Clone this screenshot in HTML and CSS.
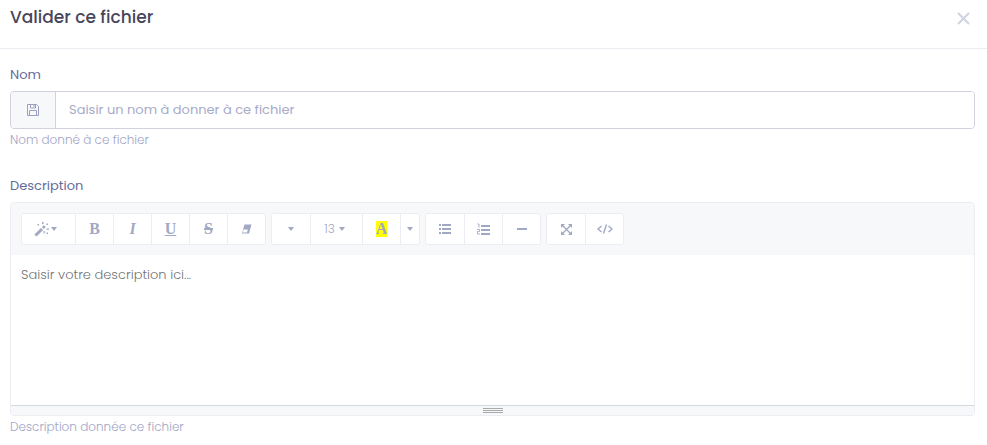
FILE: index.html
```html
<!DOCTYPE html>
<html lang="fr">
<head>
    <meta charset="UTF-8">
    <meta name="viewport" content="width=device-width, initial-scale=1.0">
    <title>Valider ce fichier</title>
    <link rel="stylesheet" href="styles.css">
</head>
<body>

<header class="modal-header">
    <h1 class="modal-title">Valider ce fichier</h1>
    <button type="button" class="close" aria-label="Fermer">
        <svg width="13" height="13" viewBox="0 0 13 13"><path d="M1 1l11 11M12 1l-11 11" fill="none" stroke="currentColor" stroke-width="2"/></svg>
    </button>
</header>

<form class="modal-body">
    <div class="form-group">
        <label for="nom">Nom</label>
        <div class="input-group">
            <span class="input-icon">
                <svg width="14" height="14" viewBox="0 0 14 14" fill="none" stroke="currentColor"><path d="M1.5 1.5h9l2 2v9h-11zM4.500 1.500v3.500h5v-3.500M8 2v2M3.500 12.500v-5h7v5"/></svg>
            </span>
            <input type="text" id="nom" placeholder="Saisir un nom à donner à ce fichier">
        </div>
        <small class="help">Nom donné à ce fichier</small>
    </div>

    <div class="form-group">
        <label for="description">Description</label>
        <div class="editor">
            <div class="toolbar">
                <div class="btn-group">
                    <button type="button" class="btn btn-style" aria-label="Style">
                        <svg width="16" height="16" viewBox="0 0 16 16"><path d="M1.500 14.500L8 8" fill="none" stroke="currentColor" stroke-width="3"/><path d="M8.800 7.200l2-2" fill="none" stroke="currentColor" stroke-width="2.500"/><path d="M3.500 3H5v1.500H3.500zM8 1h1.500v2H8zM12.500 2.500H14V4h-1.500zM12.500 7.500H15v1.200h-2.500zM12.500 11.500H14V13h-1.500zM9.500 10h1.200v2.500H9.500z" fill="currentColor"/></svg>
                        <span class="caret"></span>
                    </button>
                    <button type="button" class="btn" aria-label="Gras"><b class="letter">B</b></button>
                    <button type="button" class="btn" aria-label="Italique"><b class="letter"><i>I</i></b></button>
                    <button type="button" class="btn" aria-label="Souligné"><b class="letter underline">U</b></button>
                    <button type="button" class="btn" aria-label="Barré"><b class="letter strike">S</b></button>
                    <button type="button" class="btn" aria-label="Effacer la mise en forme">
                        <svg width="12" height="12" viewBox="0 0 12 12"><path d="M3.500 1.500h7l-2.500 9H1z" fill="currentColor"/><path d="M2.600 6.500h4.200l-.8 3H1.800z" fill="#fff"/></svg>
                    </button>
                </div>
                <div class="btn-group">
                    <button type="button" class="btn" aria-label="Police"><span class="caret"></span></button>
                    <button type="button" class="btn btn-size" aria-label="Taille">13<span class="caret"></span></button>
                    <button type="button" class="btn" aria-label="Couleur"><b class="letter highlight">A</b></button>
                    <button type="button" class="btn btn-more" aria-label="Plus de couleurs"><span class="caret"></span></button>
                </div>
                <div class="btn-group">
                    <button type="button" class="btn" aria-label="Liste à puces">
                        <svg width="12" height="10" viewBox="0 0 12 10" fill="currentColor"><path d="M0 0h2v2H0zM3 0h9v2H3zM0 4h2v2H0zM3 4h9v2H3zM0 8h2v2H0zM3 8h9v2H3z"/></svg>
                    </button>
                    <button type="button" class="btn" aria-label="Liste numérotée">
                        <svg width="13" height="12" viewBox="0 0 13 12" fill="currentColor"><path d="M4 2h9v2H4zM4 6h9v2H4zM4 10h9v2H4z"/><path d="M0.500 1h1.500v3.500M0 6.500h2.500v2H.5v2.500h2.500" fill="none" stroke="currentColor" stroke-width="0.900"/></svg>
                    </button>
                    <button type="button" class="btn" aria-label="Ligne horizontale">
                        <svg width="10" height="2" viewBox="0 0 10 2"><path d="M0 0h10v2H0z" fill="currentColor"/></svg>
                    </button>
                </div>
                <div class="btn-group">
                    <button type="button" class="btn" aria-label="Plein écran">
                        <svg width="11" height="11" viewBox="0 0 11 11"><path d="M1.500 1.500l8 8M9.500 1.500l-8 8" fill="none" stroke="currentColor" stroke-width="1.300"/><path d="M0 0h4L0 4zM11 0v4L7 0zM0 11V7l4 4zM11 11H7l4-4z" fill="currentColor"/></svg>
                    </button>
                    <button type="button" class="btn" aria-label="Code source">
                        <svg width="16" height="10" viewBox="0 0 16 10"><path d="M4.500 2L1 5l3.500 3M11.500 2L15 5l-3.500 3M9.500 .5l-3 9" fill="none" stroke="currentColor" stroke-width="1.400"/></svg>
                    </button>
                </div>
            </div>
            <textarea id="description" placeholder="Saisir votre description ici..."></textarea>
            <div class="statusbar"><span class="grip"></span></div>
        </div>
        <small class="help">Description donnée ce fichier</small>
    </div>
</form>

</body>
</html>
```
FILE: styles.css
```css
* {
    box-sizing: border-box;
}
body {
    margin: 0;
    font-family: Poppins, Inter, sans-serif;
    font-size: 13px;
    line-height: 20px;
    color: #646c9a;
    background-color: #fff;
}
button, input, textarea {
    font: inherit;
    color: inherit;
}
svg {
    display: block;
}
.modal-header {
    display: flex;
    justify-content: space-between;
    align-items: flex-start;
    padding: 5px 12px 16px 10px;
    border-bottom: 1px solid #ebedf2;
}
.modal-title {
    margin: 0;
    font-size: 17px;
    line-height: 24px;
    font-weight: 500;
    color: #48465b;
}
.close {
    padding: 7px 5px;
    border: none;
    background: none;
    color: #d0d3e3;
    cursor: pointer;
}
.modal-body {
    padding: 16px 12px 8px 10px;
}
.form-group {
    display: flex;
    flex-direction: column;
    margin-bottom: 26px;
}
.form-group:last-child {
    margin-bottom: 0;
}
.form-group label {
    margin-bottom: 6px;
}
.help {
    margin-top: 1px;
    font-size: 12px;
    font-weight: 300;
    color: #a1a5c6;
}
.input-group {
    display: flex;
    height: 38px;
    border: 1px solid #d1d1e0;
    border-radius: 4px;
    overflow: hidden;
}
.input-icon {
    display: flex;
    align-items: center;
    justify-content: center;
    width: 45px;
    background-color: #f7f8fa;
    border-right: 1px solid #d1d1e0;
    color: #9c9fc0;
}
.input-group input {
    flex: 1;
    min-width: 0;
    padding: 0 13px;
    border: none;
    outline: none;
}
.input-group input::placeholder {
    color: #a7abc8;
}
.editor {
    display: flex;
    flex-direction: column;
    border: 1px solid #ebedf2;
    border-radius: 4px;
    overflow: hidden;
}
.toolbar {
    display: flex;
    flex-wrap: wrap;
    gap: 5px;
    padding: 10px;
    background-color: #f7f8fa;
}
.btn-group {
    display: flex;
    border: 1px solid #ebedf2;
    border-radius: 3px;
    overflow: hidden;
}
.btn {
    display: flex;
    align-items: center;
    justify-content: center;
    width: 38px;
    height: 30px;
    padding: 0;
    border: none;
    background-color: #fff;
    color: #a1a8c3;
    font-size: 12px;
    cursor: pointer;
}
.btn + .btn {
    border-left: 1px solid #ebedf2;
}
.btn-style {
    width: 53px;
    gap: 1px;
    padding-right: 6px;
}
.btn-size {
    width: 52px;
    gap: 4px;
    padding-right: 4px;
    font-weight: 300;
}
.btn-more {
    width: 19px;
}
.caret {
    border-top: 4px solid currentColor;
    border-left: 3px solid transparent;
    border-right: 3px solid transparent;
}
.letter {
    font-family: "Liberation Serif", serif;
    font-size: 16px;
    line-height: 16px;
}
.underline {
    text-decoration: underline;
}
.strike {
    text-decoration: line-through 2px;
}
.highlight {
    background-color: #ff0;
}
.editor textarea {
    height: 150px;
    padding: 10px;
    border: none;
    outline: none;
    resize: none;
    font-weight: 300;
}
.editor textarea::placeholder {
    color: #757575;
}
.statusbar {
    display: flex;
    justify-content: center;
    padding: 2px 0;
    border-top: 1px solid #d5d8da;
    background-color: #f7f8fa;
}
.grip {
    width: 20px;
    height: 5px;
    border-top: 1px solid #a9a9a9;
    border-bottom: 1px solid #a9a9a9;
    background: linear-gradient(#a9a9a9, #a9a9a9) center / 100% 1px no-repeat;
}
```
